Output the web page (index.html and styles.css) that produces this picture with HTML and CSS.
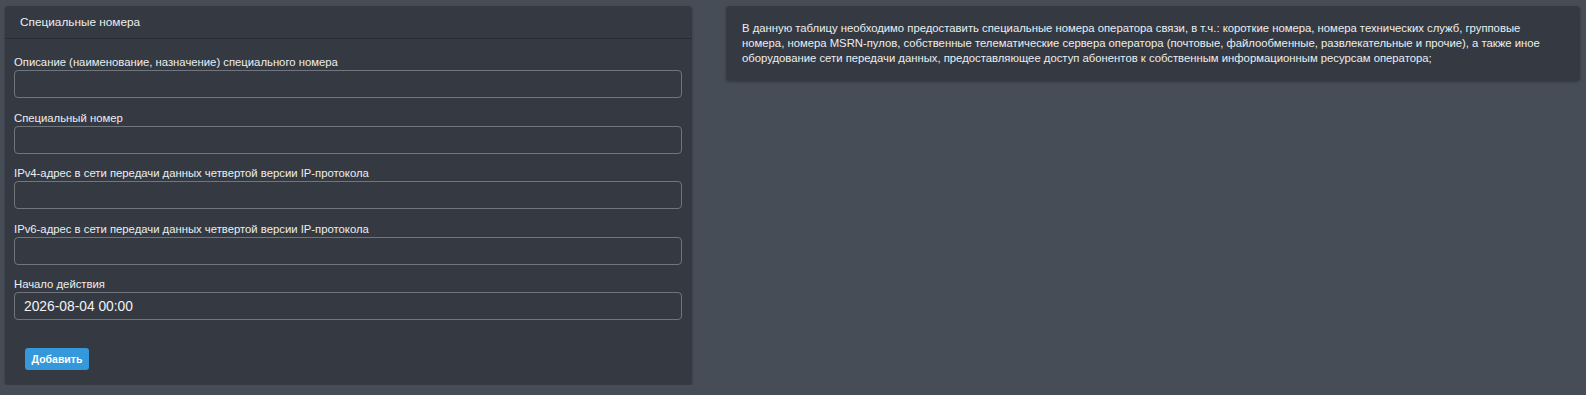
FILE: index.html
```html
<!DOCTYPE html>
<html lang="ru">
<head>
    <meta charset="UTF-8">
    <meta name="viewport" content="width=device-width, initial-scale=1.0">
    <title>Специальные номера</title>
    <link rel="stylesheet" href="styles.css">
</head>
<body>
    <div class="layout">
        <div class="card">
            <div class="card-header">Специальные номера</div>
            <form class="card-body">
                <div class="form-group">
                    <label for="descr">Описание (наименование, назначение) специального номера</label>
                    <input type="text" id="descr">
                </div>
                <div class="form-group">
                    <label for="number">Специальный номер</label>
                    <input type="text" id="number">
                </div>
                <div class="form-group">
                    <label for="ipv4">IPv4-адрес в сети передачи данных четвертой версии IP-протокола</label>
                    <input type="text" id="ipv4">
                </div>
                <div class="form-group">
                    <label for="ipv6">IPv6-адрес в сети передачи данных четвертой версии IP-протокола</label>
                    <input type="text" id="ipv6">
                </div>
                <div class="form-group">
                    <label for="begin">Начало действия</label>
                    <input type="text" id="begin" value="2026-08-04 00:00">
                </div>
                <div class="form-actions">
                    <button type="button" class="btn">Добавить</button>
                </div>
            </form>
        </div>

        <div class="card card-info">
            В данную таблицу необходимо предоставить специальные номера оператора связи, в т.ч.: короткие номера, номера технических служб, групповые номера, номера MSRN-пулов, собственные телематические сервера оператора (почтовые, файлообменные, развлекательные и прочие), а также иное оборудование сети передачи данных, предоставляющее доступ абонентов к собственным информационным ресурсам оператора;
        </div>
    </div>
</body>
</html>
```

FILE: styles.css
```css
body {
    margin: 0;
    background-color: #464d57;
    font-family: "Liberation Sans", Arial, sans-serif;
    font-size: 11.3px;
    color: #eceef0;
}
.layout {
    display: grid;
    grid-template-columns: 687px 1fr;
    gap: 34px;
    align-items: start;
    padding: 6px 6px 0 5px;
}
.card {
    background-color: #353a42;
    border-radius: 4px;
    box-shadow: 0 1px 3px rgba(0, 0, 0, 0.25);
}
.card-header {
    font-size: 11.8px;
    line-height: 16px;
    padding: 8px 15px;
    border-bottom: 1px solid #2a2e34;
}
.card-body {
    padding: 15px 10px 15px 9px;
    margin: 0;
}
.form-group {
    margin-bottom: 11.6px;
}
.form-group label {
    display: block;
    line-height: 15px;
    padding-top: 1px;
}
.form-group input {
    display: block;
    box-sizing: border-box;
    width: 100%;
    height: 28px;
    padding: 0 9px;
    background-color: #353a42;
    border: 1px solid #71757d;
    border-radius: 4px;
    color: #f1f2f4;
    font-family: "Liberation Sans", Arial, sans-serif;
    font-size: 13.8px;
    outline: none;
}
.form-actions {
    padding: 16.4px 0 0 11px;
}
.btn {
    height: 22px;
    width: 64px;
    padding: 0;
    background-color: #3498db;
    border: none;
    border-radius: 3px;
    color: #ffffff;
    font-family: "Liberation Sans", Arial, sans-serif;
    font-size: 10.5px;
    font-weight: bold;
}
.card-info {
    padding: 15px 16px;
    line-height: 15px;
}
```
